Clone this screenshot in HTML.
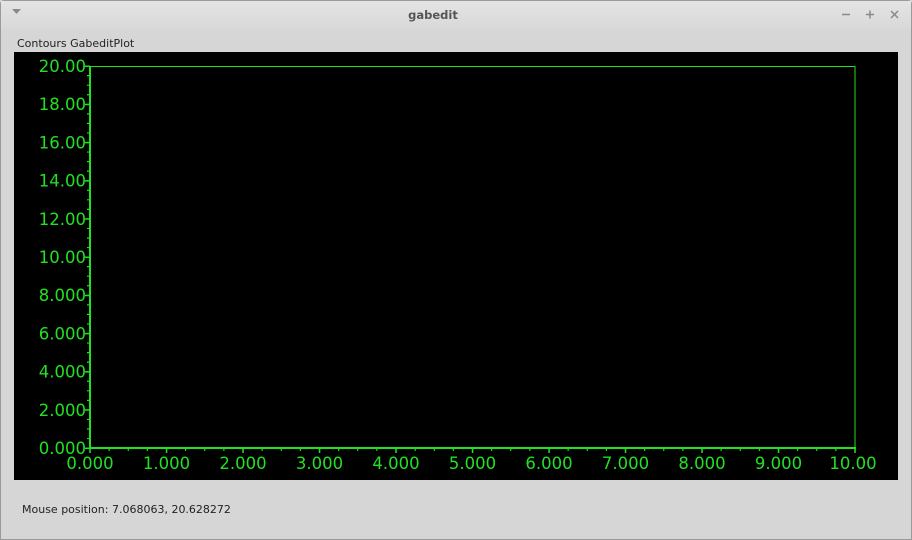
<!DOCTYPE html>
<html><head><meta charset="utf-8"><style>
html,body{margin:0;padding:0;width:912px;height:540px;overflow:hidden;background:#d6d6d6;font-family:"DejaVu Sans","Liberation Sans",sans-serif;}
.win{position:absolute;left:0;top:0;width:910px;height:538px;border:1px solid #9a9a9a;border-radius:4px 4px 0 0;background:#d6d6d6;}
.title{position:absolute;left:0;top:0;width:910px;height:29px;background:linear-gradient(#e4e4e4,#d8d8d8);}
.ttxt{position:absolute;left:332px;width:200px;top:7px;text-align:center;font-size:11.5px;font-weight:bold;color:#555;}
.lbl{position:absolute;left:17px;top:37px;font-size:11px;color:#222;}
.mouse{position:absolute;left:22px;top:503px;font-size:11px;color:#222;}
svg{position:absolute;left:0;top:0}
</style></head><body>
<div class="win">
<div class="title"><div class="ttxt">gabedit</div></div>
</div>
<svg width="912" height="540">
<polygon points="12,9 21,9 16.5,14" fill="#8a8a8a"/>
<g stroke="#8a8a8a" stroke-width="1.5">
<line x1="842" y1="14.5" x2="850" y2="14.5"/>
<line x1="866" y1="14.5" x2="874" y2="14.5"/><line x1="870" y1="10.5" x2="870" y2="18.5"/>
<line x1="891" y1="11" x2="898" y2="18"/><line x1="898" y1="11" x2="891" y2="18"/>
</g>
<rect x="14" y="52" width="884" height="428" fill="#000"/>
<g stroke="#22e022" fill="none">
<rect x="90.5" y="66.5" width="764.5" height="381.5" stroke-width="1"/>
<line x1="90" y1="66" x2="90" y2="449" stroke-width="2"/>
<line x1="89" y1="448" x2="856" y2="448" stroke-width="2"/>
<line x1="87.5" x2="87.5" y1="65.5" y2="449" stroke-width="5" stroke-dasharray="1.5 36.7"/>
<line x1="88.5" x2="88.5" y1="65.5" y2="449" stroke-width="3" stroke-dasharray="1.2 8.35"/>
<line y1="450.5" y2="450.5" x1="89.3" x2="857" stroke-width="5" stroke-dasharray="1.5 75"/>
<line y1="449.5" y2="449.5" x1="89.4" x2="857" stroke-width="3" stroke-dasharray="1.2 17.925"/>
</g>
<g fill="#22e022" font-family="DejaVu Sans, Liberation Sans, sans-serif" font-size="16.5" text-anchor="end">
<text x="86" y="72">20.00</text>
<text x="86" y="110.2">18.00</text>
<text x="86" y="148.4">16.00</text>
<text x="86" y="186.6">14.00</text>
<text x="86" y="224.8">12.00</text>
<text x="86" y="263">10.00</text>
<text x="86" y="301.2">8.000</text>
<text x="86" y="339.4">6.000</text>
<text x="86" y="377.6">4.000</text>
<text x="86" y="415.8">2.000</text>
<text x="86" y="454">0.000</text>
</g>
<g fill="#22e022" font-family="DejaVu Sans, Liberation Sans, sans-serif" font-size="16.5" text-anchor="middle">
<text x="90" y="469">0.000</text>
<text x="166.5" y="469">1.000</text>
<text x="243" y="469">2.000</text>
<text x="319.5" y="469">3.000</text>
<text x="396" y="469">4.000</text>
<text x="472.5" y="469">5.000</text>
<text x="549" y="469">6.000</text>
<text x="625.5" y="469">7.000</text>
<text x="702" y="469">8.000</text>
<text x="778.5" y="469">9.000</text>
<text x="853" y="469">10.00</text>
</g>
</svg>
<div class="lbl">Contours GabeditPlot</div>
<div class="mouse">Mouse position: 7.068063, 20.628272</div>
</body></html>
